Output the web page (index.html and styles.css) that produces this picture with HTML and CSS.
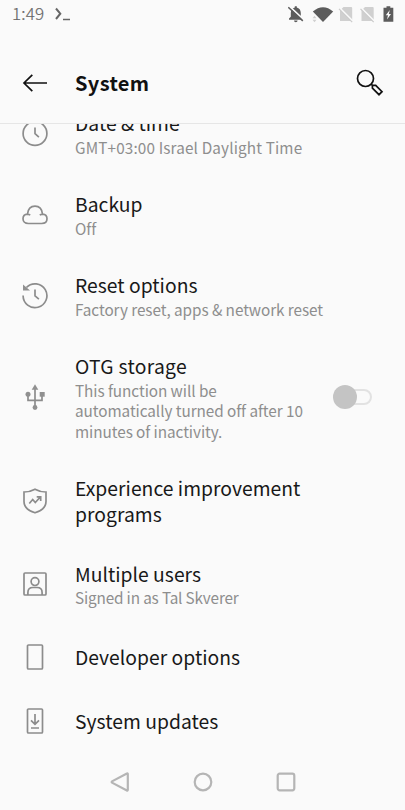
FILE: index.html
```html
<!DOCTYPE html>
<html lang="en">
<head>
<meta charset="utf-8">
<title>System</title>
<link rel="stylesheet" href="styles.css">
</head>
<body>
<div class="screen">
  <div class="status">
    <span class="clock">1:49</span>
    <svg class="prompt" width="16" height="14" viewBox="0 0 16 14"><path d="M1 1.500l4.300 5.200L1 12" fill="none" stroke="#666" stroke-width="2"/><path d="M8 12.500h7" stroke="#666" stroke-width="1.500"/></svg>
    <svg class="tray" width="108" height="18" viewBox="0 0 108 18">
      <path d="M1 14.800v-1.200l1.800-1.800V8c0-3 1.600-5 4-5.500V1.300h2v1.200c2.400.5 4 2.500 4 5.500v3.800l1.800 1.800v1.200z" fill="#5c5c5c"/><path d="M6 15.500h3.600a1.800 1.800 0 0 1-3.600 0z" fill="#5c5c5c"/>
      <path d="M1.200 1.200L15.700 14.700" stroke="#fafafa" stroke-width="1.800"/><path d="M.3 2.200L14.800 15.900" stroke="#5c5c5c" stroke-width="1.500"/>
      <path d="M24.800 6.600Q35 -2.200 45.200 6.600L35 17z" fill="#5c5c5c"/><path d="M24.500 13.200l2-2.400 2 2.400zM24.500 14.800l2 2.400 2-2.400z" fill="#d0d0d0"/>
      <path d="M55.500 2h7.700q1 0 1 1v13H52V5.500z" fill="#d0d0d0"/><path d="M51 2.500L65.500 17" stroke="#fafafa" stroke-width="2"/><path d="M51 3.900L64.200 17.100" stroke="#cbcbcb" stroke-width="1.200"/>
      <path d="M77 2h7.700q1 0 1 1v13H73.500V5.500z" fill="#d0d0d0"/><path d="M72.500 2.500L87 17" stroke="#fafafa" stroke-width="2"/><path d="M72.500 3.900L85.700 17.100" stroke="#cbcbcb" stroke-width="1.200"/>
      <path d="M98.500 1.300h3.800v1.500h3v13.900h-9.800V2.800h3z" fill="#5c5c5c"/><path d="M101.800 5l-4 5.300h2.200l-1 4.200 4-5.400h-2.200z" fill="#fafafa"/>
    </svg>
  </div>
  <header class="bar">
    <svg class="back" width="26" height="20" viewBox="0 0 26 20"><path d="M25 10H2M10.300 1.800L2 10l8.300 8.200" fill="none" stroke="#111" stroke-width="1.700"/></svg>
    <h1>System</h1>
    <svg class="search" width="30" height="30" viewBox="0 0 30 30" fill="none" stroke="#111" stroke-width="1.700"><circle cx="10.500" cy="10.500" r="8"/><path d="M16.200 16.200l2 2M17.400 20.200v-2.800h3.300l6.300 6.300-3 3z"/></svg>
  </header>
  <main class="content">
    <ul class="list">
      <li class="row"><svg class="icon" viewBox="0 0 28 28"><circle cx="14" cy="13.500" r="11.900"/><path d="M14 7.500v6.200l3.900 3.500"/></svg>
        <div class="text"><div class="title">Date &amp; time</div><div class="sub loose">GMT+03:00 Israel Daylight Time</div></div></li>
      <li class="row"><svg class="icon" viewBox="0 0 28 28"><path d="M7.300 22.500C4 22.500 2 20.500 2 17.800s2-4.500 4.500-4.700c.5-5 3.500-8 7.500-8s7 3 7.500 8c2.500.200 4.500 2 4.500 4.700s-2 4.700-5.300 4.700zM6.300 13.100c1.400 0 2.300.4 2.800 1.200M21.700 13.100c-1.400 0-2.300.4-2.800 1.200"/></svg>
        <div class="text"><div class="title">Backup</div><div class="sub">Off</div></div></li>
      <li class="row"><svg class="icon" viewBox="0 0 28 28"><path d="M5.400 5.500A11.900 11.900 0 1 1 2.100 13.500M14 7.500v6.400l3.900 3.300"/><path d="M2 2.500v6h7z" fill="#909090" stroke="none"/></svg>
        <div class="text"><div class="title">Reset options</div><div class="sub">Factory reset, apps &amp; network reset</div></div></li>
      <li class="row tall"><svg class="icon" viewBox="0 0 28 28"><path d="M14 4v21M7 12v5.300h14V12"/><g fill="#909090" stroke="none"><path d="M10.700 6.800L14 1.300l3.300 5.500z"/><circle cx="7" cy="11.300" r="2.500"/><path d="M18.700 9h5v4.700h-5z"/><circle cx="14" cy="24.500" r="2.400"/></g></svg>
        <div class="text"><div class="title spaced">OTG storage</div><div class="sub">This function will be<br>automatically turned off after 10<br>minutes of inactivity.</div></div>
        <span class="switch"><i class="knob"></i></span></li>
      <li class="row two"><svg class="icon" viewBox="0 0 28 28"><path d="M14 2.200Q19 5 25 5v9.500Q25 22.500 14 25.800 3 22.500 3 14.500V5Q9 5 14 2.200zM8.300 16.500l3.400-4 2.600 3 5-5.500M15.700 9.800h4v4.200"/></svg>
        <div class="text"><div class="title">Experience improvement<br>programs</div></div></li>
      <li class="row"><svg class="icon" viewBox="0 0 28 28"><rect x="3" y="3" width="22" height="22" rx="1"/><circle cx="14" cy="11.600" r="3.900"/><path d="M6.900 25v-2.600q0-4.900 5-4.900h4.200q5 0 5 4.900V25"/></svg>
        <div class="text"><div class="title">Multiple users</div><div class="sub tight">Signed in as Tal Skverer</div></div></li>
      <li class="row short"><svg class="icon" viewBox="0 0 28 28"><rect x="6.500" y="2" width="15" height="24" rx="1"/></svg>
        <div class="text"><div class="title">Developer options</div></div></li>
      <li class="row short"><svg class="icon" viewBox="0 0 28 28"><rect x="6.500" y="2" width="15" height="24" rx="1"/><path d="M14 7v10M10 13.300l4 4 4-4M10 21h8"/></svg>
        <div class="text"><div class="title">System updates</div></div></li>
    </ul>
  </main>
  <nav class="nav">
    <svg viewBox="0 0 22 22"><path d="M18.800 3v16a.6.6 0 0 1-.9.500L3 11.600a.7.7 0 0 1 0-1.200l14.900-7.900a.6.600 0 0 1 .9.500z"/></svg>
    <svg viewBox="0 0 22 22"><circle cx="11" cy="11" r="8.300"/></svg>
    <svg viewBox="0 0 22 22"><rect x="2.700" y="2.700" width="16.600" height="16.600" rx="2"/></svg>
  </nav>
</div>
</body>
</html>
```
FILE: styles.css
```css
* { box-sizing: border-box; }
body { margin: 0; background: #fafafa; font-family: "Noto Sans CJK SC", "Noto Sans", sans-serif; font-weight: 400; }
.screen { width: 405px; height: 810px; display: flex; flex-direction: column; overflow: hidden; }
.status { height: 28px; flex: none; display: flex; align-items: center; padding: 0 9px 0 12px; }
.clock { font-size: 17px; line-height: 26px; height: 28px; color: #666; width: 43px; font-weight: 300; letter-spacing: .2px; -webkit-text-stroke: .2px #666; }
.tray { margin-left: auto; }
.bar { height: 96px; flex: none; display: flex; align-items: center; padding: 14px 20px 0 22px; border-bottom: 1px solid #e6e6e6; }
.bar h1 { margin: 0 auto 0 27px; font-size: 20px; line-height: 26px; font-weight: 700; color: #111; letter-spacing: .35px; }
.content { height: 629px; flex: none; overflow: hidden; }
.list { list-style: none; margin: -31px 0 0; padding: 0; }
.row { height: 81px; display: flex; align-items: center; padding: 0 33px 0 21px; }
.row.tall { height: 122px; }
.row.two { height: 86px; }
.row.two + .row { height: 82px; margin-top: -1px; }
.row.short { height: 64px; }
.icon { width: 28px; height: 28px; flex: none; fill: none; stroke: #8c8c8c; stroke-width: 1.700; }
.text { flex: 1; margin-left: 26px; white-space: nowrap; }
.title { font-size: 19.300px; line-height: 26px; color: #181818; letter-spacing: .03px; }
.title.spaced { letter-spacing: .280px; }
.sub { font-size: 15.300px; line-height: 20.500px; color: #8e8e8e; letter-spacing: -.06px; position: relative; top: .400px; }
.sub.loose { letter-spacing: .140px; }
.sub.tight { letter-spacing: -.150px; }
.switch { width: 37px; height: 16px; border: 2px solid #e2e2e2; border-radius: 8px; position: relative; }
.knob { position: absolute; left: -4px; top: -6px; width: 24px; height: 24px; border-radius: 50%; background: #c4c4c4; }
.nav { flex: 1; display: flex; justify-content: center; align-items: center; gap: 61px; }
.nav svg { width: 22px; height: 22px; fill: none; stroke: #b5b5b5; stroke-width: 2.200; }
```
